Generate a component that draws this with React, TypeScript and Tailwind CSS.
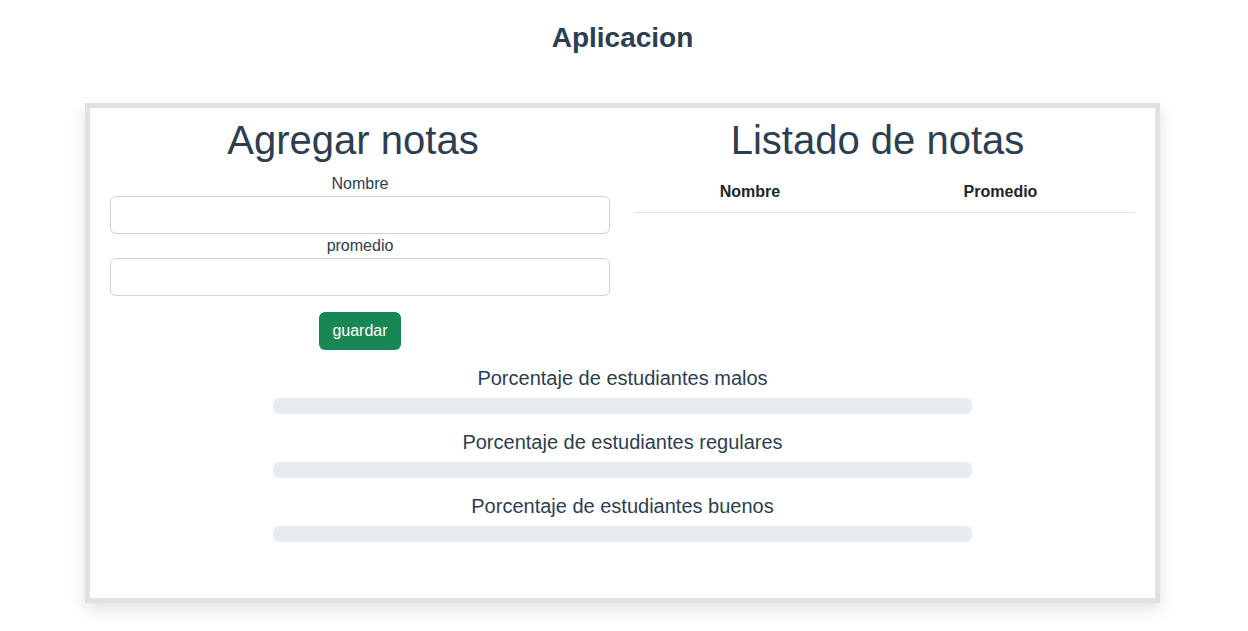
import { useState } from 'react'

export default function App() {
  const [nombre, setNombre] = useState('')
  const [promedio, setPromedio] = useState('')

  const bars = ['malos', 'regulares', 'buenos']

  return (
    <div className="min-h-screen bg-white text-[#2c3e50] font-['Liberation_Sans',Arial,sans-serif]">
      <h2 className="pt-[21px] pr-[3px] text-center text-[28px] leading-[34px] font-bold">Aplicacion</h2>

      <div className="mt-[48px] ml-[85px] w-[1075px] border-[5px] border-[#dee2e6] bg-white shadow-[0_6px_16px_rgba(0,0,0,0.12)] px-5 pt-2 pb-[56px]">
        <div className="flex gap-6">
          <div className="w-[500px] text-center">
            <h1 className="pr-[14px] text-[40px] leading-[48px] mb-2">Agregar notas</h1>
            <label className="block text-base leading-6">Nombre</label>
            <input
              value={nombre}
              onChange={e => setNombre(e.target.value)}
              className="block w-full h-[38px] border border-[#ced4da] rounded-md px-3 outline-none"
            />
            <label className="block text-base leading-6">promedio</label>
            <input
              value={promedio}
              onChange={e => setPromedio(e.target.value)}
              className="block w-full h-[38px] border border-[#ced4da] rounded-md px-3 outline-none"
            />
            <button className="mt-4 h-[38px] px-[13px] rounded-md bg-[#198754] text-white text-base">
              guardar
            </button>
          </div>

          <div className="flex-1 text-center">
            <h1 className="pr-[14px] text-[40px] leading-[48px] mb-2">Listado de notas</h1>
            <div className="grid grid-cols-[232px_1fr] border-b border-[#dee2e6] text-[#212529] font-bold">
              <div className="py-2 leading-6">Nombre</div>
              <div className="py-2 leading-6">Promedio</div>
            </div>
          </div>
        </div>

        <div className="mx-auto w-[699px] mt-4 flex flex-col gap-4">
          {bars.map(b => (
            <div key={b} className="text-center">
              <h5 className="text-xl leading-6 mb-2">Porcentaje de estudiantes {b}</h5>
              <div className="h-4 rounded-md bg-[#e9ecef]"></div>
            </div>
          ))}
        </div>
      </div>
    </div>
  )
}
